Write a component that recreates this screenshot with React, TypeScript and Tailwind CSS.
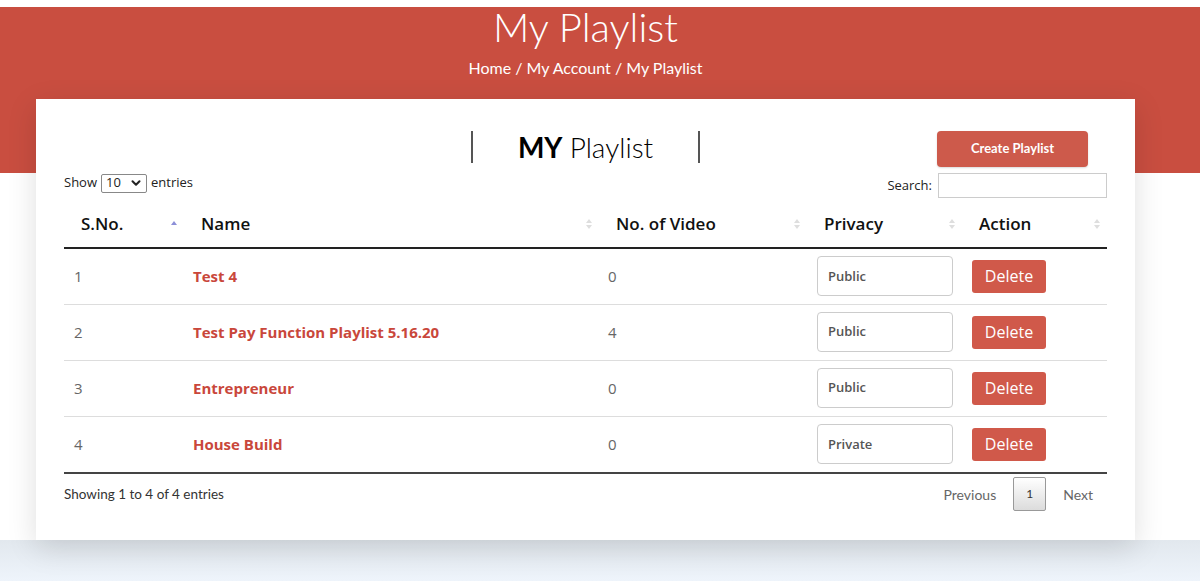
import React from "react";
import { ChevronDown } from "lucide-react";

const playlists = [
  { id: 1, name: "Test 4", videos: 0, privacy: "Public" },
  { id: 2, name: "Test Pay Function Playlist 5.16.20", videos: 4, privacy: "Public" },
  { id: 3, name: "Entrepreneur", videos: 0, privacy: "Public" },
  { id: 4, name: "House Build", videos: 0, privacy: "Private" },
];

const SortIcon = ({ active }: { active?: boolean }) => (
  <svg width="8" height="12" viewBox="0 0 8 12">
    {active ? (
      <path d="M4 3 L7 7 L1 7 Z" fill="#8c8fd8" />
    ) : (
      <>
        <path d="M4 1 L7 5 L1 5 Z" fill="#dedede" />
        <path d="M4 11 L7 7 L1 7 Z" fill="#dedede" />
      </>
    )}
  </svg>
);

const headers = [
  { label: "S.No.", active: true },
  { label: "Name" },
  { label: "No. of Video" },
  { label: "Privacy" },
  { label: "Action" },
];

export default function App() {
  return (
    <div className="min-h-[581px] w-[1200px] bg-white font-['Open_Sans',sans-serif]">
      <div className="h-[7px] bg-white" />
      {/* banner */}
      <div className="h-[166px] w-full bg-[#c94e40]">
        <div className="w-[1171px] flex flex-col items-center text-white font-['Lato',sans-serif]">
          <h1 className="text-[40px] font-light leading-[42px] -mt-[1px]">My Playlist</h1>
          <p className="mt-[10px] text-[16px] font-normal leading-[20px]">Home / My Account / My Playlist</p>
        </div>
      </div>

      {/* card */}
      <div className="ml-[36px] -mt-[74px] w-[1099px] bg-white shadow-[0_8px_28px_rgba(0,0,0,0.13)] px-[28px] pt-[32px] pb-[29px] relative">
        <div className="grid grid-cols-[1fr_auto_1fr] items-start">
          <div />
          <div className="flex items-center h-[32px] font-['Lato',sans-serif]">
            <span className="w-[2px] h-[32px] bg-[#555]" />
            <span className="mx-[45px] text-[28px] leading-[32px] text-black">
              <b className="font-bold">MY</b> <span className="font-light">Playlist</span>
            </span>
            <span className="w-[2px] h-[32px] bg-[#555]" />
          </div>
          <div className="flex justify-end pr-[19px]">
            <button className="w-[151px] h-[36px] rounded-[4px] bg-[#cd5a4b] text-white text-[13px] font-bold font-['Lato',sans-serif] shadow-[0_1px_2px_rgba(0,0,0,0.15)]">
              Create Playlist
            </button>
          </div>
        </div>

        <div className="flex justify-between items-start mt-[6px] text-[13px] text-[#222]">
          <div className="flex items-center h-[20px]">
            <span>Show</span>
            <div className="mx-[4px] w-[46px] h-[19px] border border-[#888] rounded-[2px] flex items-center justify-between pl-[4px] pr-[3px] text-[13px]">
              <span>10</span>
              <ChevronDown className="w-[14px] h-[14px]" strokeWidth={3.5} />
            </div>
            <span>entries</span>
          </div>
          <div className="flex items-center">
            <span className="mr-[6px] mt-[1px]">Search:</span>
            <input className="w-[169px] h-[25px] border border-[#ccc] outline-none" />
          </div>
        </div>

        <table className="w-full table-fixed border-collapse mt-[7px]">
          <colgroup>
            <col className="w-[120px]" />
            <col className="w-[415px]" />
            <col className="w-[208px]" />
            <col className="w-[155px]" />
            <col className="w-[145px]" />
          </colgroup>
          <thead>
            <tr className="h-[43px] border-b-2 border-[#222]">
              {headers.map((h) => (
                <th key={h.label} className="p-0 pb-[4px] text-left">
                  <div className="flex items-center justify-between pl-[17px] pr-[6px] text-[17px] font-semibold text-[#111]">
                    <span>{h.label}</span>
                    <SortIcon active={h.active} />
                  </div>
                </th>
              ))}
            </tr>
          </thead>
          <tbody>
            {playlists.map((p, i) => (
              <tr
                key={p.id}
                className={`h-[56px] ${i === playlists.length - 1 ? "" : "border-b border-[#ddd]"}`}
              >
                <td className="pl-[10px] text-[15px] text-[#666]">{p.id}</td>
                <td className="pl-[9px] text-[15px] font-bold text-[#c9473b]">{p.name}</td>
                <td className="pl-[9px] text-[15px] text-[#666]">{p.videos}</td>
                <td className="pl-[10px]">
                  <div className="w-[136px] h-[40px] border border-[#ccc] rounded-[4px] flex items-center pl-[10px] text-[13px] font-semibold text-[#555]">
                    {p.privacy}
                  </div>
                </td>
                <td className="pl-[10px]">
                  <button className="w-[74px] h-[33px] rounded-[3px] bg-[#d0594a] text-white text-[16px]">
                    Delete
                  </button>
                </td>
              </tr>
            ))}
          </tbody>
        </table>
        <div className="border-t-2 border-[#444]" />

        <div className="flex justify-between items-center mt-[3px] font-['Lato',sans-serif]">
          <span className="text-[13.5px] text-[#333]">Showing 1 to 4 of 4 entries</span>
          <div className="flex items-center text-[14px] text-[#666] pr-[14px]">
            <span className="px-[14px]">Previous</span>
            <span className="mx-[3px] w-[33px] h-[34px] border border-[#999] rounded-[2px] bg-gradient-to-b from-white to-[#dcdcdc] flex items-center justify-center text-[12px] text-[#333]">
              1
            </span>
            <span className="pl-[14px]">Next</span>
          </div>
        </div>
      </div>
      <div className="h-[41px] bg-gradient-to-b from-[#e2e8ee] to-[#eef4fb]" />
    </div>
  );
}
